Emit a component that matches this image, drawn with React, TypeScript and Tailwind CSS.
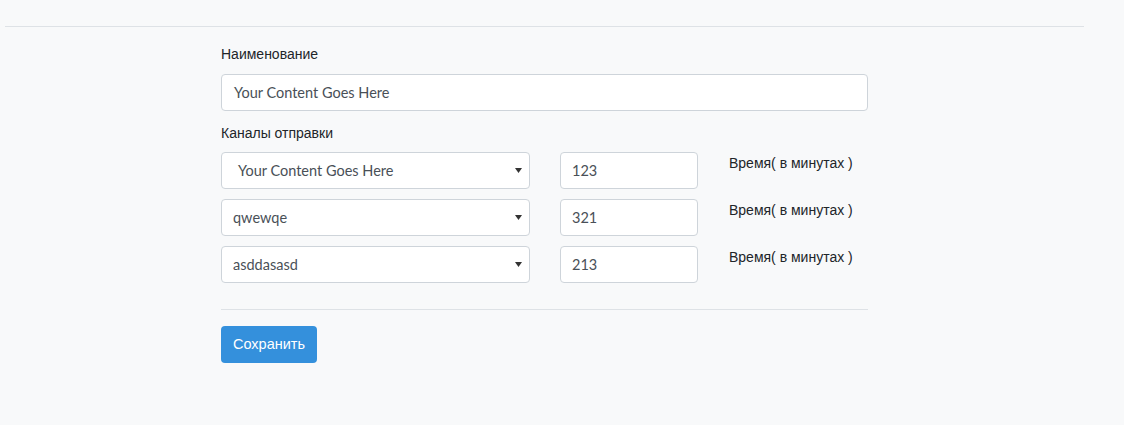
import React from "react";

const rows = [
  { sel: "Your Content Goes Here", num: "123", extra: true },
  { sel: "qwewqe", num: "321", extra: false },
  { sel: "asddasasd", num: "213", extra: false },
];

function Arrow() {
  return (
    <svg width="7" height="5" viewBox="0 0 7 5" className="absolute right-[7px] top-[15px]">
      <path d="M0 0H7L3.5 5Z" fill="#333" />
    </svg>
  );
}

export default function App() {
  return (
    <div className="w-[1124px] h-[425px] bg-[#f8f9fa] overflow-hidden">
      <div className="pt-[26px] pl-[5px] w-[1084px]">
        <div className="h-px bg-[#dee2e6]" />
      </div>
      <div className="ml-[221px] w-[647px] pt-[18px]">
        <div className="text-[14px] leading-[18px] text-[#212529] font-['Liberation_Sans',Arial,sans-serif]">Наименование</div>
        <div className="mt-[11px] h-[37px] rounded-[4px] border border-[#ced4da] bg-white px-[12px] flex items-center text-[14.5px] text-[#495057] font-['Lato',sans-serif]">
          Your Content Goes Here
        </div>
        <div className="mt-[13px] text-[14px] leading-[18px] text-[#212529] font-['Liberation_Sans',Arial,sans-serif]">Каналы отправки</div>
        <div className="mt-[10px] flex flex-col gap-[10px]">
          {rows.map((r, i) => (
            <div key={i} className="flex items-start">
              <div className={`relative w-[309px] h-[37px] rounded-[4px] border border-[#ced4da] bg-white flex items-center text-[14.5px] text-[#495057] font-['Lato',sans-serif] ${r.extra ? "pl-[16px]" : "pl-[11px]"}`}>
                {r.sel}
                <Arrow />
              </div>
              <div className="ml-[30px] w-[138px] h-[37px] rounded-[4px] border border-[#ced4da] bg-white px-[11px] flex items-center text-[14.5px] text-[#495057] font-['Lato',sans-serif]">
                {r.num}
              </div>
              <div className="ml-[31px] mt-[3px] text-[14px] leading-[16px] text-[#212529] font-['Liberation_Sans',Arial,sans-serif]">
                Время( в минутах )
              </div>
            </div>
          ))}
        </div>
        <div className="mt-[26px] h-px bg-[#dee2e6]" />
        <button className="mt-[16px] h-[37px] px-[12px] rounded-[4px] bg-[#3490dc] text-white text-[14.5px] font-['Liberation_Sans',Arial,sans-serif]">
          Сохранить
        </button>
      </div>
    </div>
  );
}
